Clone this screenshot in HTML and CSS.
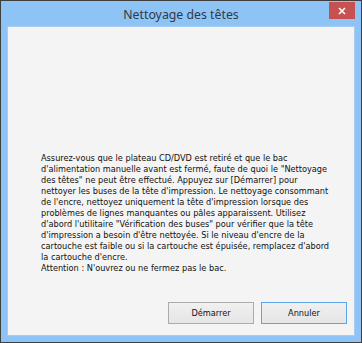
FILE: index.html
```html
<!DOCTYPE html>
<html lang="fr">
<head>
  <meta charset="UTF-8" />
  <title>Nettoyage des têtes</title>
  <link rel="stylesheet" href="styles.css">
</head>
<body>
  <div class="window">
    <div class="titlebar">
      <span class="title">Nettoyage des têtes</span>
      <button class="close" aria-label="Fermer">
        <svg width="8" height="8" viewBox="0 0 8 8">
          <path d="M1 1 L7 7 M7 1 L1 7" stroke="#fff" stroke-width="1.6" />
        </svg>
      </button>
    </div>
    <div class="client">
      <p class="message">Assurez-vous que le plateau CD/DVD est retiré et que le bac<br>d'alimentation manuelle avant est fermé, faute de quoi le "Nettoyage<br>des têtes" ne peut être effectué. Appuyez sur [Démarrer] pour<br>nettoyer les buses de la tête d'impression. Le nettoyage consommant<br>de l'encre, nettoyez uniquement la tête d'impression lorsque des<br>problèmes de lignes manquantes ou pâles apparaissent. Utilisez<br>d'abord l'utilitaire "Vérification des buses" pour vérifier que la tête<br>d'impression a besoin d'être nettoyée. Si le niveau d'encre de la<br>cartouche est faible ou si la cartouche est épuisée, remplacez d'abord<br>la cartouche d'encre.<br>Attention : N'ouvrez ou ne fermez pas le bac.</p>
      <div class="buttons">
        <button class="btn">Démarrer</button>
        <button class="btn btn-default">Annuler</button>
      </div>
    </div>
  </div>
</body>
</html>
```

FILE: styles.css
```css
body {
  margin: 0;
  padding: 0;
  background-color: #fff;
}

.window {
  width: 362px;
  height: 343px;
  box-sizing: border-box;
  border: 1px solid #3f3f3f;
  background-color: #8ec3f5;
  display: flex;
  flex-direction: column;
}

.titlebar {
  height: 25px;
  display: flex;
  justify-content: center;
  align-items: center;
  position: relative;
}

.title {
  font-family: 'Noto Sans', sans-serif;
  font-size: 12.3px;
  color: #2e3a46;
  margin-top: 2px;
}

.close {
  position: absolute;
  top: 1px;
  right: 6px;
  width: 26px;
  height: 17px;
  padding: 0;
  border: none;
  background-color: #c75050;
  display: flex;
  justify-content: center;
  align-items: center;
}

.client {
  flex: 1;
  margin: 0 6px 6px 6px;
  border: 1px solid #a9cdf0;
  background-color: #f4f4f4;
  display: flex;
  flex-direction: column;
  justify-content: flex-end;
}

.message {
  margin: 0 0 28px 33px;
  font-family: 'DejaVu Sans', sans-serif;
  font-size: 8.2px;
  line-height: 11px;
  color: #111;
}

.buttons {
  display: flex;
  justify-content: flex-end;
  gap: 7px;
  margin: 0 7px 11px 0;
}

.btn {
  width: 86px;
  height: 22px;
  padding: 0;
  border: 1px solid #acacac;
  background: linear-gradient(#f0f0f0, #e5e5e5);
  font-family: 'DejaVu Sans', sans-serif;
  font-size: 8.2px;
  color: #111;
}

.btn-default {
  border-color: #5ea6ec;
}
```
